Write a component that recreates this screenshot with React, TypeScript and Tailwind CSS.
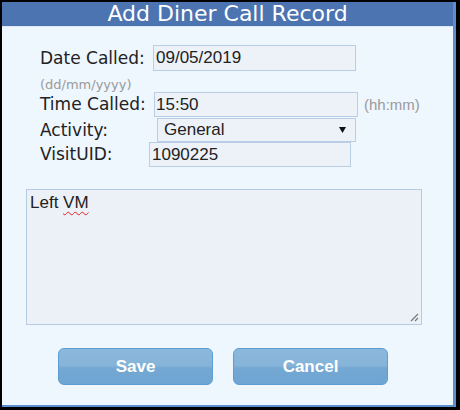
const labelFont = "font-['DejaVu_Sans',Verdana,sans-serif] text-[17px] text-[#222]"
const inputBox =
  "h-full border border-[#b9cde5] bg-[#edf1f8] font-['Liberation_Sans',Arial,sans-serif] text-[17px] text-[#222] flex items-center"

function Field({
  label,
  labelWidth,
  boxClass,
  children,
}: {
  label: string
  labelWidth: string
  boxClass: string
  children: React.ReactNode
}) {
  return (
    <>
      <span className={`${labelFont} ${labelWidth} shrink-0 leading-none`}>{label}</span>
      <div className={`${inputBox} ${boxClass}`}>{children}</div>
    </>
  )
}

export default function App() {
  return (
    <div className="w-[460px] h-[410px] bg-black pl-[2px] pt-[2px] pr-[4px] pb-[3px]">
      <div className="h-full flex flex-col border-r-[3px] border-b-2 border-[#5b8fcf] bg-[#eef6fe]">
        <div className="h-[24px] shrink-0 bg-[#4b74b1] text-center text-white text-[22px] leading-[24px] font-['DejaVu_Sans',Verdana,sans-serif]">
          Add Diner Call Record
        </div>
        <div className="h-px bg-[#dbe8f6]" />

        <div className="pl-[24px] pt-[18px]">
          <div className="pl-[14px]">
            <div className="flex items-center h-[26px]">
              <Field label="Date Called:" labelWidth="w-[113px]" boxClass="w-[203px] pl-[2px]">
                09/05/2019
              </Field>
            </div>
            <div className="h-[21px] pt-[6px] font-['DejaVu_Sans',Verdana,sans-serif] text-[13px] leading-[16px] text-[#9a9a9a]">
              (dd/mm/yyyy)
            </div>
            <div className="flex items-center h-[25px]">
              <Field label="Time Called:" labelWidth="w-[114px]" boxClass="w-[204px] pl-[1px]">
                15:50
              </Field>
              <span className="ml-[6px] font-['Liberation_Sans',Arial,sans-serif] text-[15px] text-[#9a9a9a] leading-none">
                (hh:mm)
              </span>
            </div>
            <div className="flex items-center h-[24px] mt-px">
              <Field label="Activity:" labelWidth="w-[117px]" boxClass="w-[199px] pl-[6px] pr-[9px] justify-between">
                <span>General</span>
                <svg width="7" height="6" viewBox="0 0 7 6">
                  <path d="M0 0 H7 L3.5 6 Z" fill="#111" />
                </svg>
              </Field>
            </div>
            <div className="flex items-center h-[25px]">
              <Field label="VisitUID:" labelWidth="w-[109px]" boxClass="w-[202px] pl-[2px]">
                1090225
              </Field>
            </div>
          </div>

          <div className="relative mt-[22px] w-[396px] h-[136px] border border-[#b7cbe2] bg-[#ecf1f8] pl-[3px] pt-[3px] font-['Liberation_Sans',Arial,sans-serif] text-[17px] leading-[20px] text-[#222]">
            Left{' '}
            <span className="underline decoration-wavy decoration-[#e02020] decoration-1 underline-offset-[3px]">VM</span>
            <svg className="absolute right-[2px] bottom-[2px]" width="10" height="10" viewBox="0 0 10 10">
              <path d="M9 2 L2 9 M9 6 L6 9" stroke="#777" strokeWidth="1.2" />
            </svg>
          </div>

          <div className="flex gap-[20px] mt-[23px] ml-[32px]">
            {['Save', 'Cancel'].map((t) => (
              <button
                key={t}
                className="w-[155px] h-[37px] rounded-[6px] border border-[#5d9dd4] bg-[linear-gradient(#8bb8dc_0%,#86b4d9_48%,#74a8d3_54%,#6fa5d2_100%)] text-white font-bold text-[17px] font-['Liberation_Sans',Arial,sans-serif]"
              >
                {t}
              </button>
            ))}
          </div>
        </div>
      </div>
    </div>
  )
}
